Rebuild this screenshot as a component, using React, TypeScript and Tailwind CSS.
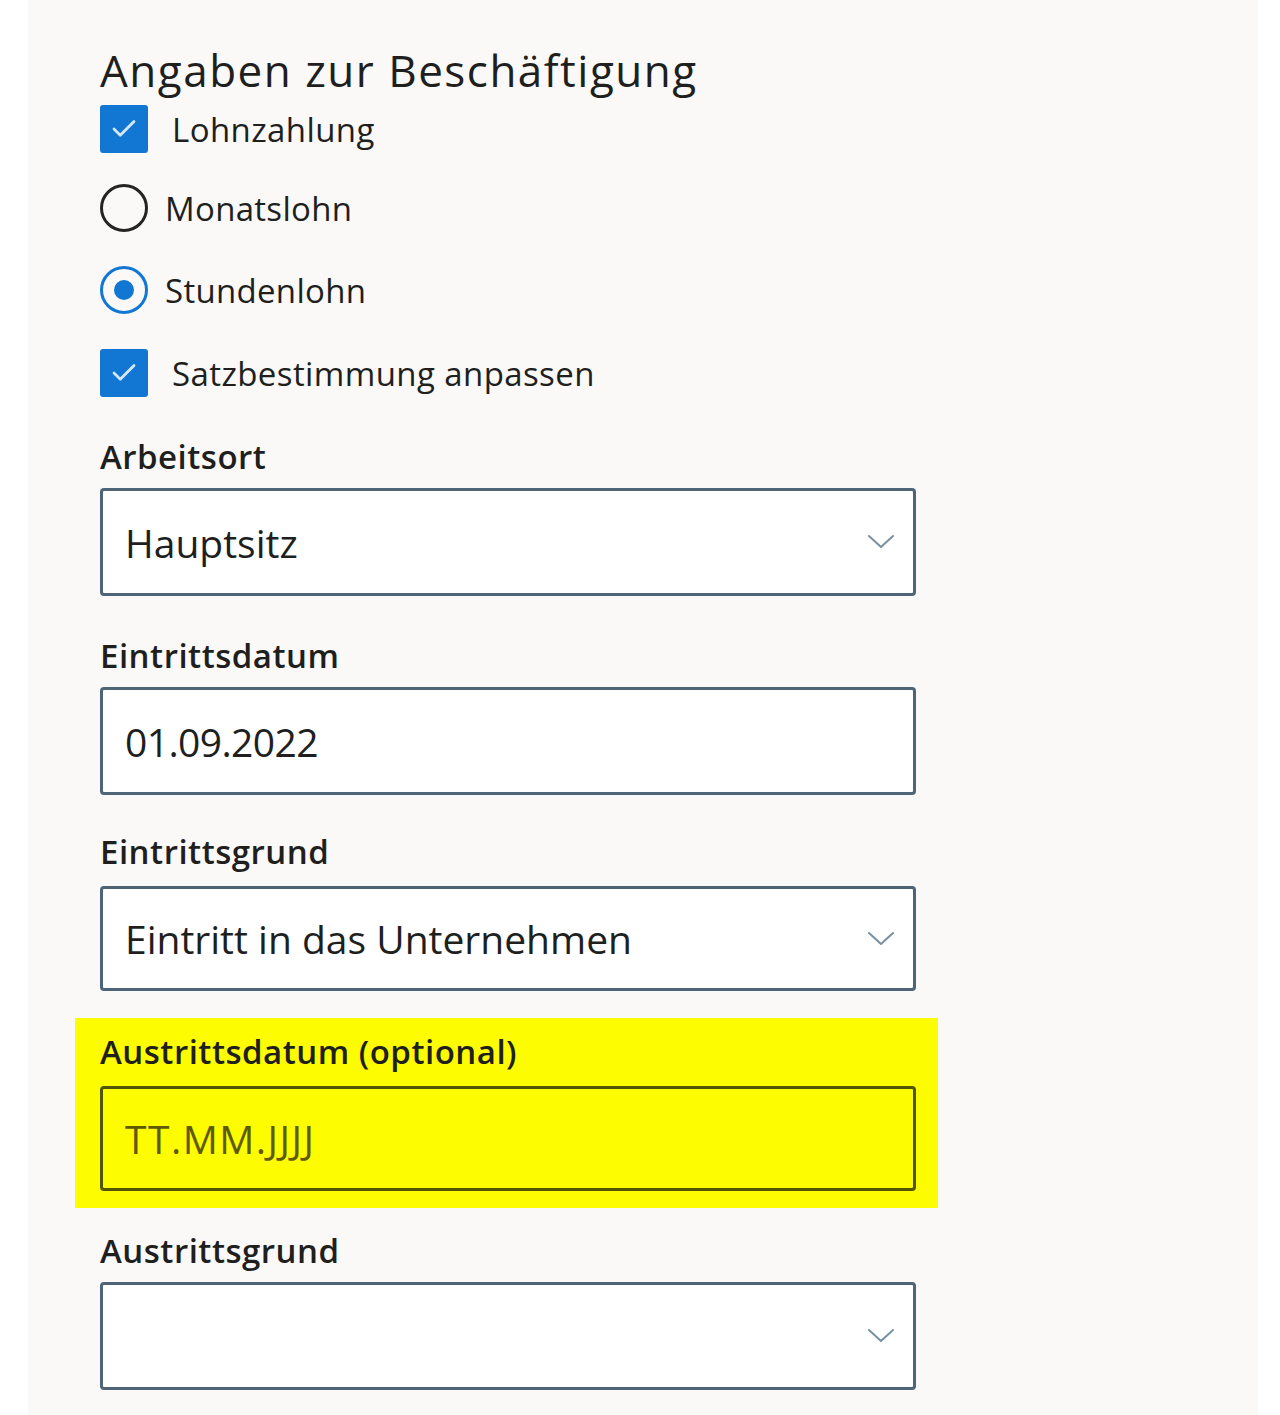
import { Check } from "lucide-react";

const font = { fontFamily: '"Open Sans", "Noto Sans", sans-serif' };

function Chevron() {
  return (
    <svg width="28" height="16" viewBox="0 0 28 16" fill="none" className="shrink-0">
      <path d="M2 2 L14 13 L26 2" stroke="#7890a2" strokeWidth="2" strokeLinecap="round" strokeLinejoin="round" />
    </svg>
  );
}

function CheckRow({ label, mt }: { label: string; mt: string }) {
  return (
    <div className={`flex h-[48px] items-center ${mt}`}>
      <span className="flex h-[48px] w-[48px] items-center justify-center rounded-[3px] bg-[#1277d3]">
        <Check className="h-[30px] w-[30px] text-[#d6e8f8]" strokeWidth={2.2} />
      </span>
      <span className="ml-[24px] text-[33px] leading-none tracking-[0.4px] text-[#201f1e]">{label}</span>
    </div>
  );
}

function RadioRow({ label, checked, mt }: { label: string; checked?: boolean; mt: string }) {
  return (
    <div className={`flex h-[48px] items-center ${mt}`}>
      <span
        className={`flex h-[48px] w-[48px] items-center justify-center rounded-full border-[3px] ${
          checked ? "border-[#1277d3]" : "border-[#252423]"
        }`}
      >
        {checked && <span className="h-[20px] w-[20px] rounded-full bg-[#1277d3]" />}
      </span>
      <span className="ml-[17px] text-[33px] leading-none tracking-[0.3px] text-[#201f1e]">{label}</span>
    </div>
  );
}

function FieldLabel({ text, mt }: { text: string; mt: string }) {
  return (
    <div className={`h-[36px] text-[33px] font-semibold leading-[36px] tracking-[0.5px] text-[#201f1e] ${mt}`}>
      {text}
    </div>
  );
}

function Box({
  value,
  placeholder,
  select,
  h,
  mt,
  yellow,
  tight,
}: {
  value?: string;
  placeholder?: string;
  select?: boolean;
  h: string;
  mt: string;
  yellow?: boolean;
  tight?: boolean;
}) {
  return (
    <div
      className={`flex w-[816px] items-center justify-between rounded-[4px] border-[3px] pl-[22px] pr-[18px] ${h} ${mt} ${
        yellow ? "border-[#4f5500] bg-transparent" : "border-[#4d6577] bg-white"
      }`}
    >
      <span
        className={`text-[39px] leading-none ${
          value ? "text-[#201f1e]" : "tracking-[1.5px] text-[#5f5a00]"
        } ${tight ? "tracking-[-0.6px]" : ""}`}
      >
        {value ?? placeholder}
      </span>
      {select && <Chevron />}
    </div>
  );
}

export default function App() {
  return (
    <div className="h-[1415px] w-[1280px] overflow-hidden bg-white" style={font}>
      <div className="ml-[28px] h-full w-[1230px] bg-[#faf9f8] pl-[72px] pt-[42px]">
        <h1 className="h-[56px] text-[44px] leading-[56px] tracking-[1.5px] text-[#201f1e]">
          Angaben zur Beschäftigung
        </h1>
        <CheckRow label="Lohnzahlung" mt="mt-[7px]" />
        <RadioRow label="Monatslohn" mt="mt-[31px]" />
        <RadioRow label="Stundenlohn" checked mt="mt-[34px]" />
        <CheckRow label="Satzbestimmung anpassen" mt="mt-[35px]" />

        <FieldLabel text="Arbeitsort" mt="mt-[42px]" />
        <Box value="Hauptsitz" select h="h-[108px]" mt="mt-[13px]" />

        <FieldLabel text="Eintrittsdatum" mt="mt-[42px]" />
        <Box value="01.09.2022" tight h="h-[108px]" mt="mt-[13px]" />

        <FieldLabel text="Eintrittsgrund" mt="mt-[39px]" />
        <Box value="Eintritt in das Unternehmen" select h="h-[105px]" mt="mt-[16px]" />

        <div className="-ml-[25px] mt-[27px] w-[863px] bg-[#fdfc00] pb-[17px] pl-[25px] pt-[16px]">
          <FieldLabel text="Austrittsdatum (optional)" mt="mt-0" />
          <Box placeholder="TT.MM.JJJJ" yellow h="h-[105px]" mt="mt-[16px]" />
        </div>

        <FieldLabel text="Austrittsgrund" mt="mt-[25px]" />
        <Box select h="h-[108px]" mt="mt-[13px]" />
      </div>
    </div>
  );
}
